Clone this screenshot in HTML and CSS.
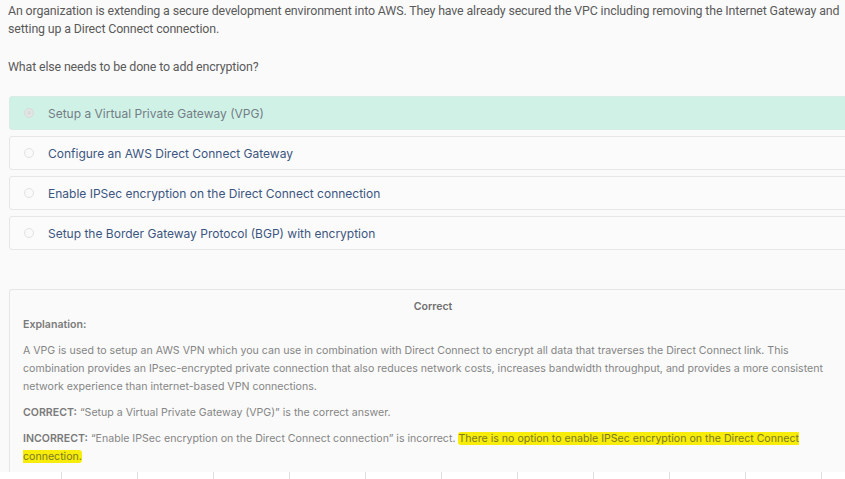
FILE: index.html
```html
<!DOCTYPE html>
<html>
<head>
<meta charset="utf-8">
<link rel="stylesheet" href="styles.css">
</head>
<body>
<div class="page">
  <p class="question">An organization is extending a secure development environment into AWS. They have already secured the VPC including removing the Internet Gateway and setting up a Direct Connect connection.</p>
  <p class="question ask">What else needs to be done to add encryption?</p>

  <ul class="options">
    <li class="option selected"><span class="radio checked"></span><span class="label">Setup a Virtual Private Gateway (VPG)</span></li>
    <li class="option"><span class="radio"></span><span class="label">Configure an AWS Direct Connect Gateway</span></li>
    <li class="option"><span class="radio"></span><span class="label">Enable IPSec encryption on the Direct Connect connection</span></li>
    <li class="option"><span class="radio"></span><span class="label">Setup the Border Gateway Protocol (BGP) with encryption</span></li>
  </ul>

  <div class="result">
    <div class="result-title">Correct</div>
    <div class="result-head">Explanation:</div>
    <p class="result-text">A VPG is used to setup an AWS VPN which you can use in combination with Direct Connect to encrypt all data that traverses the Direct Connect link. This combination provides an IPsec-encrypted private connection that also reduces network costs, increases bandwidth throughput, and provides a more consistent network experience than internet-based VPN connections.</p>
    <p class="result-text"><b>CORRECT:</b> “Setup a Virtual Private Gateway (VPG)” is the correct answer.</p>
    <p class="result-text"><b>INCORRECT:</b> “Enable IPSec encryption on the Direct Connect connection” is incorrect. <mark>There is no option to enable IPSec encryption on the Direct Connect connection.</mark></p>
  </div>

  <div class="table-row">
    <span class="cell first"></span><span class="cell"></span><span class="cell"></span><span class="cell"></span><span class="cell"></span><span class="cell"></span><span class="cell"></span><span class="cell"></span><span class="cell"></span><span class="cell"></span><span class="cell"></span><span class="cell"></span>
  </div>
</div>
</body>
</html>
```

FILE: styles.css
```css
html, body {
  margin: 0;
  padding: 0;
  background: #fafafa;
  overflow: hidden;
}
.page {
  width: 880px;
  padding: 2px 0 0 8px;
  font-family: Roboto, "Liberation Sans", sans-serif;
}
.question {
  margin: 0 0 20px 0;
  width: 845px;
  font-size: 12.4px;
  line-height: 18px;
  color: #5a5a5a;
  letter-spacing: -0.14px;
}
.ask { margin-bottom: 20px; }

.options {
  list-style: none;
  margin: 0 0 39px 1px;
  padding: 0;
  display: flex;
  flex-direction: column;
  gap: 6px;
}
.option {
  height: 32px;
  display: flex;
  align-items: center;
  border: 1px solid #e6e6e8;
  border-radius: 3px;
  background: #fbfbfb;
  font-family: Inter, "Open Sans", sans-serif;
  font-size: 12px;
  color: #3b5680;
}
.option.selected {
  background: #d0f2e6;
  border-color: #d6ece4;
  color: #747d86;
}
.radio {
  width: 8px;
  height: 8px;
  margin: 0 14px 0 14px;
  border-radius: 50%;
  border: 1px solid #e2e2e2;
  background: #fafafa;
  flex: none;
}
.radio.checked {
  border-color: #d8dcda;
  background: #d8dcda;
  box-shadow: inset 0 0 0 2px #e2e6e4;
}

.result {
  margin-left: 1px;
  height: 183px;
  box-sizing: border-box;
  border: 1px solid #e6e6e6;
  border-bottom: none;
  border-radius: 3px 3px 0 0;
  background: #fafafa;
  padding: 8px 13px 0 13px;
  font-family: Inter, "Open Sans", sans-serif;
  font-size: 10.6px;
  line-height: 18px;
  color: #858585;
}
.result-title {
  width: 820px;
  text-align: center;
  font-weight: 600;
  color: #707070;
}
.result-head {
  font-weight: 600;
  color: #7a7a7a;
  margin-bottom: 8px;
}
.result-text {
  margin: 0 0 8px 0;
  width: 810px;
}
.result-text b {
  font-weight: 600;
  color: #7a7a7a;
}
mark {
  background: #f8ec0a;
  color: #7b7a22;
  border-radius: 3px;
}

.table-row {
  display: flex;
  height: 10px;
  margin-left: -8px;
  background: #ffffff;
}
.cell {
  width: 76px;
  flex: none;
  border-left: 1px solid #dedede;
  box-sizing: border-box;
}
.cell.first {
  width: 61px;
  border-left: none;
}
```
